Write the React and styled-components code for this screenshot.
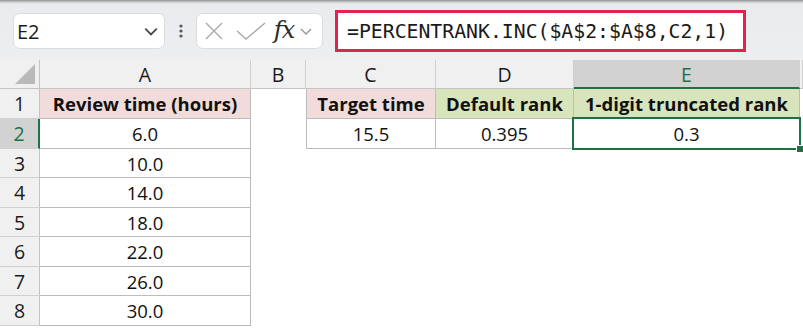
import React from "react";
import styled, { createGlobalStyle } from "styled-components";

const Global = createGlobalStyle`
  html, body { margin: 0; padding: 0; background: #ffffff; }
  body { width: 803px; height: 328px; overflow: hidden; font-family: "Open Sans", "Noto Sans", sans-serif; }
`;

const Page = styled.div`
  width: 803px;
  height: 328px;
  display: flex;
  flex-direction: column;
  background: #ffffff;
`;

const Toolbar = styled.div`
  height: 60px;
  flex: none;
  display: flex;
  align-items: center;
  padding-left: 13px;
  box-sizing: border-box;
  background: linear-gradient(#8e8e8e 0px, #c9cbcd 2px, #e9ebee 4px, #eceef0 100%);
`;

const Box = styled.div`
  height: 36px;
  width: ${(p) => p.$w}px;
  box-sizing: border-box;
  background: #ffffff;
  border: 1px solid #dcdcdc;
  border-radius: 7px;
  display: flex;
  align-items: center;
  margin-top: 2px;
`;

const NameText = styled.span`
  font-family: "Open Sans", "Noto Sans", sans-serif;
  font-size: 20px;
  color: #1b1b1b;
  margin-left: 3px;
  flex: 1;
`;

const Dots = styled.div`
  width: 31px;
  display: flex;
  justify-content: center;
  margin-top: 2px;
`;

const FormulaBox = styled.div`
  margin-left: 12px;
  width: 411px;
  height: 42px;
  box-sizing: border-box;
  border: 3px solid #e0244d;
  background: #ffffff;
  display: flex;
  align-items: center;
  padding-left: 9px;
  margin-top: 1px;
`;

const FormulaText = styled.span`
  font-family: "DejaVu Sans Mono", "Liberation Mono", monospace;
  font-size: 19.8px;
  color: #1a1a1a;
  margin-top: 1px;
`;

const IconSlot = styled.span`
  display: flex;
  align-items: center;
  justify-content: center;
  width: ${(p) => p.$w}px;
  margin-left: ${(p) => p.$ml || 0}px;
`;

const Fx = styled.span`
  font-family: "DejaVu Serif", "Liberation Serif", serif;
  font-style: italic;
  font-size: 24px;
  color: #2a2a2a;
  font-weight: 400;
  letter-spacing: -1px;
  margin-top: -2px;
`;

const Sheet = styled.div`
  display: grid;
  grid-template-columns: 40px 211px 55px 130px 138px 226px 3px;
  grid-template-rows: 29px 30px 30px 29px 30px 29px 30px 29px 30px;
  font-family: "Open Sans", "Noto Sans", sans-serif;
`;

const Corner = styled.div`
  background: #f0f0f0;
  border-right: 1px solid #c4c4c4;
  border-bottom: 1px solid #c4c4c4;
  box-sizing: border-box;
  display: flex;
  align-items: flex-end;
  justify-content: flex-end;
  padding: 0 4px 4px 0;
`;

const ColHead = styled.div`
  background: ${(p) => (p.$active ? "#d2d2d2" : "#f0f0f0")};
  color: ${(p) => (p.$active ? "#1e7145" : "#1a1a1a")};
  border-right: 1px solid #d0d0d0;
  border-bottom: ${(p) => (p.$active ? "2px solid #1e7145" : "1px solid #c4c4c4")};
  box-sizing: border-box;
  display: flex;
  align-items: center;
  justify-content: center;
  font-size: 19.5px;
  padding-top: ${(p) => (p.$active ? "1px" : "0")};
`;

const RowHead = styled.div`
  background: ${(p) => (p.$active ? "#d2d2d2" : "#f0f0f0")};
  color: ${(p) => (p.$active ? "#1e7145" : "#1a1a1a")};
  border-right: ${(p) => (p.$active ? "2px solid #1e7145" : "1px solid #c4c4c4")};
  border-bottom: 1px solid #d0d0d0;
  box-sizing: border-box;
  display: flex;
  align-items: center;
  justify-content: center;
  font-size: 19.5px;
`;

const Cell = styled.div`
  position: relative;
  z-index: ${(p) => (p.$sel ? 2 : "auto")};
  box-sizing: border-box;
  background: ${(p) => p.$fill || "#ffffff"};
  border-right: ${(p) => (p.$bordered ? "1px solid #bcbcbc" : "none")};
  border-bottom: ${(p) => (p.$bordered ? "1px solid #bcbcbc" : "none")};
  border-left: ${(p) => (p.$leftEdge ? "1px solid #bcbcbc" : "none")};
  display: flex;
  align-items: center;
  justify-content: center;
  font-size: 18.5px;
  font-weight: ${(p) => (p.$bold ? 700 : 400)};
  color: #111111;
  white-space: nowrap;
`;

const Selection = styled.div`
  position: absolute;
  left: -2px;
  top: -2px;
  right: -2px;
  bottom: -2px;
  border: 2px solid #1e7145;
  pointer-events: none;
`;

const Handle = styled.div`
  position: absolute;
  right: -4px;
  bottom: -4px;
  width: 6px;
  height: 6px;
  background: #1e7145;
  border-left: 1px solid #ffffff;
  border-top: 1px solid #ffffff;
`;

const PINK = "#f2dcdb";
const GREEN = "#d8e4bc";

const rows = [
  [
    { t: "Review time (hours)", fill: PINK, bold: true, b: true },
    {},
    { t: "Target time", fill: PINK, bold: true, b: true, left: true },
    { t: "Default rank", fill: GREEN, bold: true, b: true },
    { t: "1-digit truncated rank", fill: GREEN, bold: true, b: true },
  ],
  [
    { t: "6.0", b: true },
    {},
    { t: "15.5", b: true, left: true },
    { t: "0.395", b: true },
    { t: "0.3", b: true, sel: true },
  ],
  ...["10.0", "14.0", "18.0", "22.0", "26.0", "30.0"].map((v) => [
    { t: v, b: true },
    {},
    {},
    {},
    {},
  ]),
];

const Chevron = ({ size = 14, color = "#444" }) => (
  <svg width={size} height={size} viewBox="0 0 14 14">
    <path d="M2 5 L7 10 L12 5" fill="none" stroke={color} strokeWidth="1.5" />
  </svg>
);

export default function App() {
  return (
    <Page>
      <Global />
      <Toolbar>
        <Box $w={152}>
          <NameText>E2</NameText>
          <IconSlot $w={26}>
            <Chevron size={16} />
          </IconSlot>
        </Box>
        <Dots>
          <svg width="4" height="14" viewBox="0 0 4 14">
            <circle cx="2" cy="2" r="1.6" fill="#555" />
            <circle cx="2" cy="7" r="1.6" fill="#555" />
            <circle cx="2" cy="12" r="1.6" fill="#555" />
          </svg>
        </Dots>
        <Box $w={127}>
          <IconSlot $w={22} $ml={6}>
            <svg width="20" height="20" viewBox="0 0 20 20">
              <path d="M2 2 L18 18 M18 2 L2 18" stroke="#a8a8a8" strokeWidth="1.4" fill="none" />
            </svg>
          </IconSlot>
          <IconSlot $w={34} $ml={9}>
            <svg width="32" height="20" viewBox="0 0 32 20">
              <path d="M2 10 L11 18 L30 2" stroke="#a8a8a8" strokeWidth="1.4" fill="none" />
            </svg>
          </IconSlot>
          <IconSlot $w={26} $ml={3}>
            <Fx>fx</Fx>
          </IconSlot>
          <IconSlot $w={16} $ml={1}>
            <Chevron size={14} color="#9a9a9a" />
          </IconSlot>
        </Box>
        <FormulaBox>
          <FormulaText>=PERCENTRANK.INC($A$2:$A$8,C2,1)</FormulaText>
        </FormulaBox>
      </Toolbar>
      <Sheet>
        <Corner>
          <svg width="20" height="20" viewBox="0 0 20 20">
            <path d="M20 0 L20 20 L0 20 Z" fill="#b9b9b9" />
          </svg>
        </Corner>
        {["A", "B", "C", "D", "E"].map((c) => (
          <ColHead key={c} $active={c === "E"}>
            {c}
          </ColHead>
        ))}
        <ColHead />
        {rows.map((r, i) => (
          <React.Fragment key={i}>
            <RowHead $active={i === 1}>{i + 1}</RowHead>
            {r.map((c, j) => (
              <Cell
                key={j}
                $fill={c.fill}
                $bold={c.bold}
                $bordered={c.b}
                $leftEdge={c.left}
                $sel={c.sel}
              >
                {c.t}
                {c.sel && (
                  <Selection>
                    <Handle />
                  </Selection>
                )}
              </Cell>
            ))}
            <Cell />
          </React.Fragment>
        ))}
      </Sheet>
    </Page>
  );
}
